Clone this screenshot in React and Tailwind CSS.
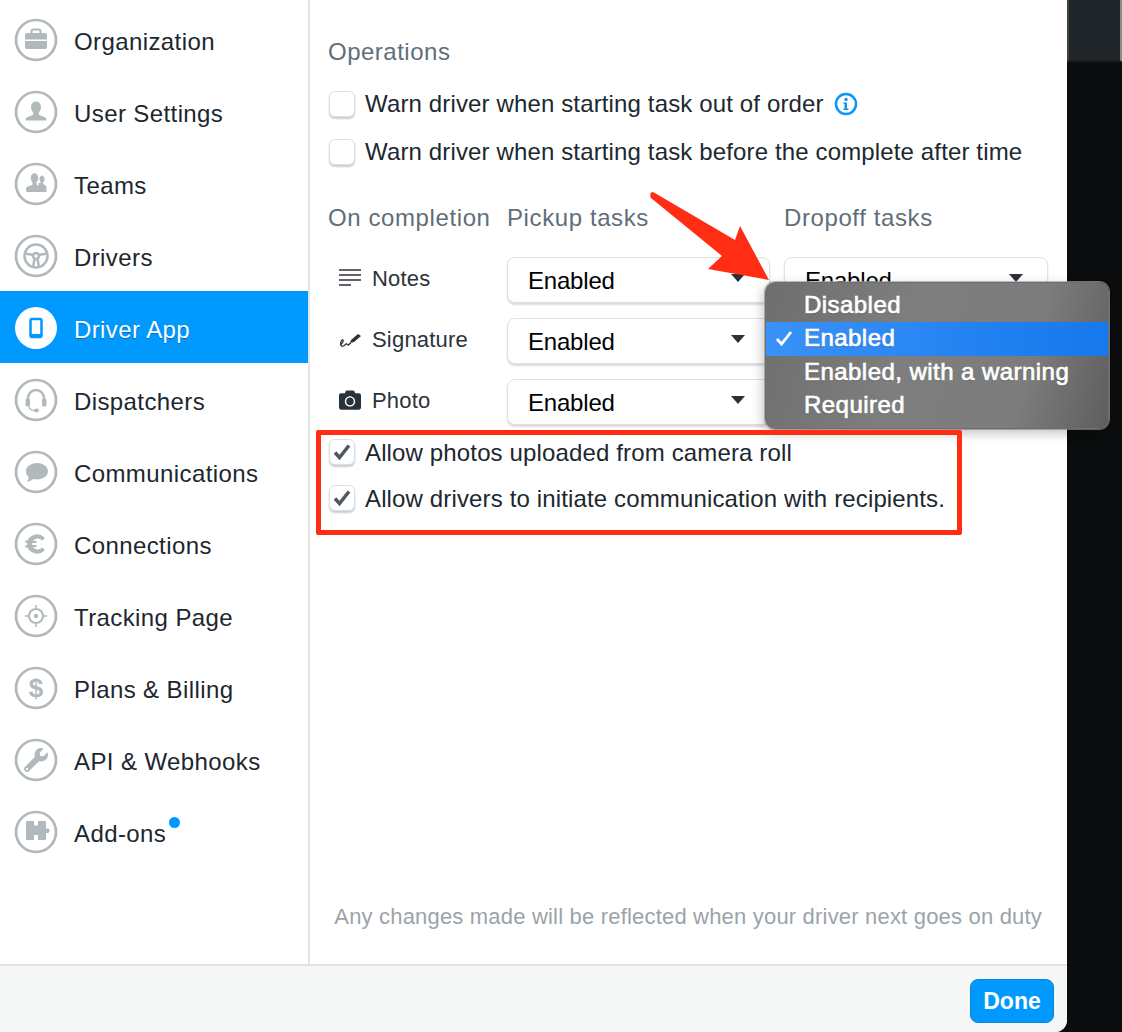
import React from "react";
import { FaWrench, FaCamera } from "react-icons/fa";

const G = "#b2b9bc";
const glyphs = {
  briefcase: (
    <g fill={G}>
      <path d="M17.5 15.5v-2a2 2 0 0 1 2-2h5a2 2 0 0 1 2 2v2" fill="none" stroke={G} strokeWidth="2" />
      <path d="M13 15h18a2 2 0 0 1 2 2v4.500H11V17a2 2 0 0 1 2-2z" />
      <path d="M11 23h22v6a2 2 0 0 1-2 2H13a2 2 0 0 1-2-2z" />
    </g>
  ),
  user: (
    <path fill={G} d="M22 11.500c3.200 0 5 2.500 5 5.500 0 2.400-1 4.400-2.200 5.600v1.600c0 1 3.200 1.700 5.600 2.800 1.300.6 2 1.500 2 2.500v1H11.600v-1c0-1 .7-1.900 2-2.500 2.400-1.100 5.600-1.800 5.600-2.800v-1.600C18 21.400 17 19.400 17 17c0-3 1.800-5.500 5-5.500z" />
  ),
  teams: (
    <g fill={G}>
      <path d="M27.500 13.500c1.900 0 3 1.500 3 3.400 0 1.400-.6 2.600-1.300 3.300v1.600c0 .7 1.500 1 2.300 1.600.7.500 1 1.100 1 1.900V30h-8v-9h2.300v-.8c-.7-.7-1.300-1.900-1.300-3.300 0-1.900 1.100-3.400 3-3.400z" />
      <path d="M20 11c2.800 0 4.200 2.200 4.200 4.800 0 2-.8 3.600-1.700 4.500v2c0 1 2.900 1.400 4.700 2.300 1.200.6 1.800 1.400 1.800 2.400v1.500a1.500 1.500 0 0 1-1.500 1.500H13.500a1.500 1.500 0 0 1-1.500-1.500V27c0-1 .6-1.800 1.800-2.400 1.800-.9 4.700-1.300 4.700-2.300v-2c-.9-.9-1.700-2.500-1.700-4.500 0-2.600 1.400-4.800 4.200-4.800z" />
    </g>
  ),
  wheel: (
    <g fill="none" stroke={G} strokeWidth="2.500">
      <circle cx="22" cy="22" r="11.500" />
      <circle cx="22" cy="22" r="3" />
      <path d="M11 19.500c4 .5 7 1.500 8 1.500M33 19.500c-4 .5-7 1.500-8 1.500M20.500 25c-.5 3-1 5.500-1.500 8M23.500 25c.5 3 1 5.500 1.500 8" />
    </g>
  ),
  headset: (
    <g>
      <path d="M14 24v-4a8 8 0 0 1 16 0v4" fill="none" stroke={G} strokeWidth="2.500" />
      <rect x="11.500" y="20.500" width="4.500" height="8" rx="1.500" fill={G} />
      <rect x="28" y="20.500" width="4.500" height="8" rx="1.500" fill={G} />
      <path d="M15 28.500c.5 3 2.500 4 6 4" fill="none" stroke={G} strokeWidth="1.500" />
      <ellipse cx="22.500" cy="32.500" rx="2.500" ry="2" fill={G} />
    </g>
  ),
  chat: (
    <path fill={G} d="M23 13c6.200 0 11 3.600 11 8.300 0 4.700-4.800 8.200-11 8.200-1.400 0-2.700-.2-4-.5-1.500 1.500-4 2.700-6.500 2.800 1.300-1.200 2.100-2.800 2.300-4.600C12.900 25.700 12 23.600 12 21.300 12 16.600 16.800 13 23 13z" />
  ),
  connect: (
    <g fill={G}>
      <path d="M31 16A10.500 10.500 0 0 0 13.500 18.500H11v2h2v3h-2v2h2.500A10.500 10.500 0 0 0 31 28l-3-2.500a5.500 5.500 0 0 1-9-.5h3.500v-2H18v-2h4.500v-2H19a5.500 5.500 0 0 1 9-.5z" />
    </g>
  ),
  target: (
    <g fill="none" stroke={G}>
      <circle cx="22" cy="22" r="7" strokeWidth="2" />
      <circle cx="22" cy="22" r="2.200" fill={G} stroke="none" />
      <path d="M22 11v5M22 28v5M11 22h5M28 22h5" strokeWidth="1.500" />
    </g>
  ),
  puzzle: (
    <path fill={G} d="M12 12a1 1 0 0 1 1-1h7v4.500h4V11h7a1 1 0 0 1 1 1v6.500h1.500a2.200 2.200 0 0 1 0 4.400H32V29a1 1 0 0 1-1 1h-7v-5h-4v5h-7a1 1 0 0 1-1-1z" />
  ),
};

function NavIcon({ name }) {
  if (name === "phone") {
    return (
      <svg width="44" height="44" viewBox="0 0 44 44" className="shrink-0">
        <circle cx="22" cy="22" r="21" fill="#fff" />
        <rect x="16.500" y="13" width="11" height="18" rx="1.500" fill="none" stroke="#0099ff" strokeWidth="2.500" />
        <rect x="16.500" y="28" width="11" height="3" fill="#0099ff" />
      </svg>
    );
  }
  return (
    <svg width="44" height="44" viewBox="0 0 44 44" className="shrink-0">
      <circle cx="22" cy="22" r="20" fill="none" stroke="#b0b8bb" strokeWidth="2.700" />
      {name === "dollar" ? (
        <text x="22" y="31" textAnchor="middle" fontFamily="Liberation Sans" fontWeight="700" fontSize="26" fill={G}>$</text>
      ) : name === "wrench" ? (
        <foreignObject x="10" y="10" width="24" height="24">
          <FaWrench size={24} color={G} />
        </foreignObject>
      ) : (
        glyphs[name]
      )}
    </svg>
  );
}

const nav = [
  ["briefcase", "Organization"],
  ["user", "User Settings"],
  ["teams", "Teams"],
  ["wheel", "Drivers"],
  ["phone", "Driver App"],
  ["headset", "Dispatchers"],
  ["chat", "Communications"],
  ["connect", "Connections"],
  ["target", "Tracking Page"],
  ["dollar", "Plans & Billing"],
  ["wrench", "API & Webhooks"],
  ["puzzle", "Add-ons"],
];

function Checkbox({ checked }) {
  return (
    <span className="flex h-[26px] w-[26px] shrink-0 items-center justify-center rounded-[6px] border border-[#dcdfe1] bg-white shadow-[0_2px_2px_rgba(0,0,0,0.2)]">
      {checked && (
        <svg width="20" height="20" viewBox="0 0 20 20">
          <path d="M3 10.500l4.500 5L17 3.500" fill="none" stroke="#4c5963" strokeWidth="3.500" />
        </svg>
      )}
    </span>
  );
}

function CheckRow({ checked, children, className }) {
  return (
    <div className={`flex h-7 items-center pl-px ${className}`}>
      <Checkbox checked={checked} />
      <span className={`ml-[10px] flex items-center whitespace-nowrap tracking-[0.14px] text-[#20282f] ${checked ? "pt-[2px]" : ""}`}>{children}</span>
    </div>
  );
}

function Select({ className }) {
  return (
    <div className={`flex h-[46px] items-center justify-between rounded-[8px] border border-[#dfe2e3] bg-white pl-5 pr-6 shadow-[0_2px_2px_rgba(0,0,0,0.14)] ${className}`}>
      <span className="pt-[2px] text-[24px] leading-none tracking-[-0.2px] text-black">Enabled</span>
      <span className="mb-1 h-0 w-0 border-x-[7px] border-t-[8px] border-x-transparent border-t-[#2a3138]" />
    </div>
  );
}

function SettingRow({ icon, label }) {
  return (
    <div className="flex">
      <div className="flex w-[179px] items-center pb-1 pl-[11px] text-[#2b333a]">
        <span className="flex w-[22px] justify-center">{icon}</span>
        <span className="ml-[11px] text-[22px] tracking-[0.2px]">{label}</span>
      </div>
      <Select className="w-[263px]" />
      <Select className="ml-[14px] w-[264px]" />
    </div>
  );
}

const notesIcon = (
  <svg width="22" height="18" viewBox="0 0 22 18"><path d="M0 1h22M0 6h22M0 11h22M0 16h12" stroke="#2b333a" strokeWidth="1.500" /></svg>
);
const signIcon = (
  <svg width="22" height="18" viewBox="0 0 22 18">
    <path d="M1 15c2-1 4-4 3-5s-3 2-2 5 4 0 5-1 1 1 2 1 2-2 3-2" fill="none" stroke="#2b333a" strokeWidth="1.300" />
    <path d="M12 10l7-6 3 2-7 6-4 1z" fill="#2b333a" />
  </svg>
);

export default function App() {
  return (
    <div className="relative h-[1032px] w-[1122px] overflow-hidden bg-[#0b0c0d] font-['Liberation_Sans',Arial,sans-serif] text-[24px]">
      <div className="absolute right-0 top-0 h-[62px] w-[55px] border-b-2 border-l-2 border-r-2 border-b-[#1a1d1f] border-l-[#3f4244] border-r-[#8a8a8a] bg-[#1f2528]" />
      <div className="flex h-full w-[1067px] flex-col overflow-hidden rounded-br-[12px] bg-white">
        <div className="flex min-h-0 flex-1">
          <nav className="w-[310px] shrink-0 border-r-2 border-[#e3e5e5] pt-[3px]">
            {nav.map(([icon, label]) => {
              const active = label === "Driver App";
              return (
                <div key={label} className={`flex h-[72px] items-center pl-[14px] pt-[2px] ${active ? "bg-[#0099ff] text-white [text-shadow:0_1px_1px_rgba(0,0,0,0.3)]" : "text-[#1d2730]"}`}>
                  <NavIcon name={icon} />
                  <span className="relative ml-[16px] whitespace-nowrap pt-[4px] tracking-[0.4px]">
                    {label}
                    {label === "Add-ons" && <span className="absolute -right-[14px] top-[5px] h-[11px] w-[11px] rounded-full bg-[#0099ff]" />}
                  </span>
                </div>
              );
            })}
          </nav>
          <main className="flex min-w-0 flex-1 flex-col pl-[18px] pr-[19px] pt-[38px] pb-[34px]">
            <div className="flex h-7 items-center tracking-[0.5px] text-[#5f6e7b]">Operations</div>
            <CheckRow className="mt-[24px]">
              Warn driver when starting task out of order
              <svg className="ml-[10px]" width="24" height="24" viewBox="0 0 24 24">
                <circle cx="12" cy="12" r="10" fill="none" stroke="#0f96f5" strokeWidth="2.500" />
                <circle cx="12" cy="7.500" r="1.700" fill="#0f96f5" />
                <path d="M9.500 10.500h3.500v6h1.500v1.500h-5v-1.500h1v-4.500h-1z" fill="#0f96f5" />
              </svg>
            </CheckRow>
            <CheckRow className="mt-[20px]">Warn driver when starting task before the complete after time</CheckRow>
            <div className="mt-[38px] flex h-7 items-center tracking-[0.6px] text-[#5f6e7b]">
              <span className="w-[179px]">On completion</span>
              <span className="w-[277px]">Pickup tasks</span>
              <span>Dropoff tasks</span>
            </div>
            <div className="mt-[25px] flex flex-col gap-[15px]">
              <SettingRow icon={notesIcon} label="Notes" />
              <SettingRow icon={signIcon} label="Signature" />
              <SettingRow icon={<FaCamera size={22} color="#2b333a" />} label="Photo" />
            </div>
            <CheckRow checked className="mt-[13px]">Allow photos uploaded from camera roll</CheckRow>
            <CheckRow checked className="mt-[18px]">Allow drivers to initiate communication with recipients.</CheckRow>
            <p className="mt-auto flex h-7 items-center justify-end whitespace-nowrap pr-[6px] text-[22px] tracking-[0.19px] text-[#9aa3aa]">Any changes made will be reflected when your driver next goes on duty</p>
          </main>
        </div>
        <div className="flex h-[68px] shrink-0 items-center justify-end border-t-2 border-[#dfe2e2] bg-[#f5f7f7] pr-[13px] pt-[4px]">
          <button className="flex h-[44px] w-[84px] items-center justify-center rounded-[8px] border border-[#0a86d8] bg-[#0099ff] text-[23px] font-bold text-white">Done</button>
        </div>
      </div>

      {/* select menu overlay */}
      <div className="absolute left-[765px] top-[282px] h-[147px] w-[344px] rounded-[10px] border border-[#6f6f6f] bg-[linear-gradient(105deg,#6e6e6e_0%,#7e7e7e_40%,#7c7c7c_75%,#5e5e5e_100%)] pt-[6px] text-[24px] tracking-[0.45px] text-white shadow-[-2px_4px_12px_rgba(0,0,0,0.25),0_0_0_1px_rgba(170,170,170,0.7)] [-webkit-text-stroke:0.7px_white] [text-shadow:0_1px_1px_rgba(0,0,0,0.35)]">
        <div className="flex h-[33px] items-center pb-[2px] pl-[38px]">Disabled</div>
        <div className="relative flex h-[34px] items-center bg-[linear-gradient(90deg,#3a92f8,#1578ec)] pb-[2px] pl-[38px]">
          <svg className="absolute left-[9px] top-[8px]" width="18" height="17" viewBox="0 0 18 17"><path d="M2 9l4.500 5L16 2" fill="none" stroke="#fff" strokeWidth="2.800" /></svg>
          Enabled
        </div>
        <div className="flex h-[33px] items-center pb-[2px] pl-[38px]">Enabled, with a warning</div>
        <div className="flex h-[33px] items-center pb-[2px] pl-[38px]">Required</div>
      </div>

      {/* annotations */}
      <div className="pointer-events-none absolute left-[316px] top-[430px] h-[105px] w-[646px] rounded-[2px] border-[5.500px] border-[#ff2d13]" />
      <svg className="pointer-events-none absolute left-[640px] top-[185px]" width="140" height="105" viewBox="640 185 140 105">
        <path d="M651 192.500c1-.5 2-.5 3 0L735 240l5-14 29 54-61-11 14-13-71-58c-1-1-1-4 0-5.500z" fill="#ff2d13" />
      </svg>
    </div>
  );
}
